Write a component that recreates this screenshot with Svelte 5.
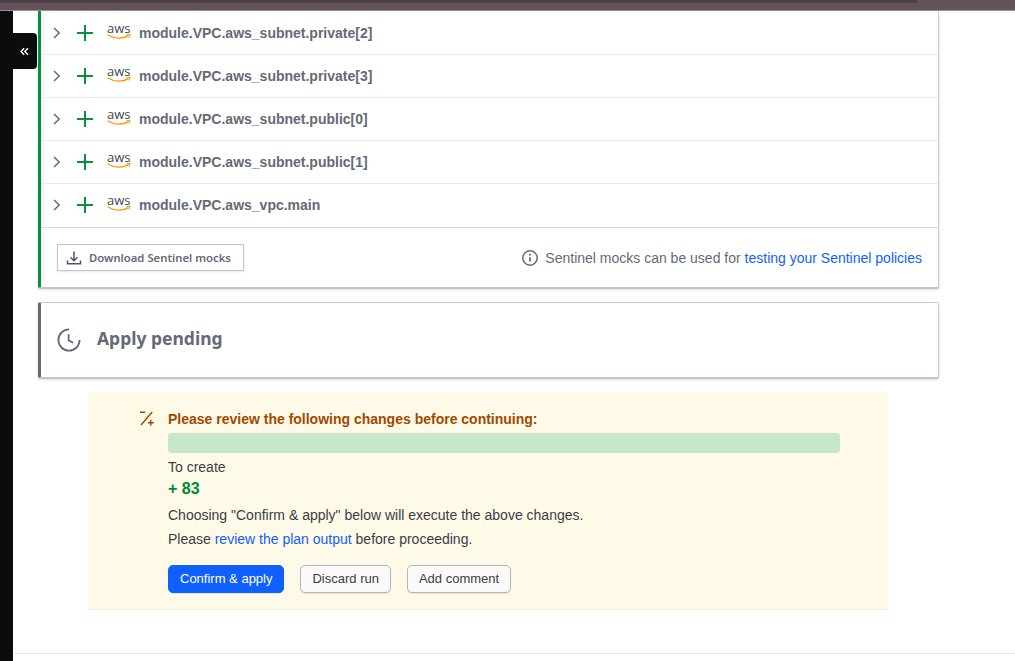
<script>
  const rows = [
    'module.VPC.aws_subnet.private[2]',
    'module.VPC.aws_subnet.private[3]',
    'module.VPC.aws_subnet.public[0]',
    'module.VPC.aws_subnet.public[1]',
    'module.VPC.aws_vpc.main'
  ];
</script>

<div class="page">
  <div class="topbar"><div class="tab"></div></div>
  <div class="body">
    <aside class="rail">
      <button class="handle" aria-label="Collapse">
        <svg width="9" height="9" viewBox="0 0 10 10" fill="none" stroke="#fff" stroke-width="1.6"><path d="M4.6 1.5 1.2 5l3.4 3.5M8.8 1.5 5.4 5l3.4 3.5"/></svg>
      </button>
    </aside>
    <main class="main">
      <section class="card plan">
        {#each rows as row}
          <div class="row">
            <svg class="chev" width="10" height="12" viewBox="0 0 10 12" fill="none" stroke="#656a76" stroke-width="1.5"><path d="M2 1l5.2 5L2 11"/></svg>
            <svg class="plus" width="16" height="16" viewBox="0 0 16 16" fill="none" stroke="#0a8f3c" stroke-width="2"><path d="M8 0v16M0 8h16"/></svg>
            <span class="aws">
              <span class="aws-text">aws</span>
              <svg width="24" height="6" viewBox="0 0 24 6" fill="none"><path d="M0.5 0.8C7 5 16 5.2 21.5 1.6" stroke="#f90" stroke-width="1.3"/><path d="M19.6 0.7 23.2 0.4 21.9 3.6" stroke="#f90" stroke-width="1"/></svg>
            </span>
            <span class="name">{row}</span>
          </div>
        {/each}
        <div class="foot">
          <button class="dl">
            <svg width="16" height="16" viewBox="0 0 16 16" fill="none" stroke="#4f5460" stroke-width="1.5"><path d="M8 1.5v9M4.5 7.2 8 10.7l3.5-3.5M1.5 10.5v3.2h13v-3.2"/></svg>
            <span>Download Sentinel mocks</span>
          </button>
          <p class="hint">
            <svg width="16" height="16" viewBox="0 0 16 16" fill="none" stroke="#656a76" stroke-width="1.5"><circle cx="8" cy="8" r="7.2"/><path d="M8 7.2v4.4" stroke-width="1.8"/><circle cx="8" cy="4.8" r="1" fill="#656a76" stroke="none"/></svg>
            <span>Sentinel mocks can be used for <a href="#t">testing your Sentinel policies</a></span>
          </p>
        </div>
      </section>

      <section class="card pending">
        <svg width="24" height="24" viewBox="0 0 24 24" fill="none" stroke="#656a76" stroke-width="1.8"><path d="M22.6 12A10.6 10.6 0 1 1 12 1.4"/><path d="M15.5 2.1l.1.05M19 4.2l.1.1M21.4 7.6l.05.1" stroke-width="2"/><path d="M11.6 6.2v6.2l4.6 2.4"/></svg>
        <h2>Apply pending</h2>
      </section>

      <section class="banner">
        <svg class="bi" width="16" height="16" viewBox="0 0 16 16" fill="none" stroke="#9e4b00" stroke-width="1.4"><path d="M1 1.2h5.2M13.2 1 2 14M11.8 8.8v6M8.8 11.8h6"/></svg>
        <div class="bc">
          <h3>Please review the following changes before continuing:</h3>
          <div class="bar"></div>
          <div class="create">To create</div>
          <div class="num">+ 83</div>
          <p class="l1">Choosing "Confirm &amp; apply" below will execute the above changes.</p>
          <p class="l2">Please <a href="#r">review the plan output</a> before proceeding.</p>
          <div class="btns">
            <button class="btn primary">Confirm &amp; apply</button>
            <button class="btn">Discard run</button>
            <button class="btn">Add comment</button>
          </div>
        </div>
      </section>
      <div class="rule"></div>
    </main>
  </div>
</div>

<style>
  :global(body) { margin: 0; background: #fff; overflow: hidden; }
  .page { width: 1015px; height: 661px; display: flex; flex-direction: column; font-family: "Liberation Sans", Arial, sans-serif; overflow: hidden; }
  .topbar { height: 10px; background: #64525b; border-bottom: 1px solid #9c8c94; flex: none; }
  .tab { width: 918px; height: 3px; background: #4f414a; border-radius: 0 0 6px 0; }
  .body { flex: 1; display: flex; position: relative; min-height: 0; }
  .rail { width: 13px; background: #0c0c0e; flex: none; }
  .handle { position: absolute; left: 13px; top: 22px; width: 24px; height: 36px; padding: 0 0 0 7px; display: flex; align-items: center; background: #0c0c0e; border: 0; border-radius: 0 4px 4px 0; }
  .main { flex: 1; display: flex; flex-direction: column; padding-left: 24px; border-left: 1px solid #fff; min-width: 0; }
  .card { width: 901px; box-sizing: border-box; background: #fff; border-radius: 0 0 2px 2px; box-shadow: 0 1px 1px rgba(101,106,118,.3), 0 2px 3px rgba(101,106,118,.18); }
  .plan { border-left: 3px solid #0a8f3c; border-right: 1px solid #c9ccd2; border-bottom: 1px solid #c2c5cb; padding-top: 1px; }
  .row { height: 43px; box-sizing: border-box; display: flex; align-items: center; border-bottom: 1px solid #ebebed; padding-left: 11px; }
  .row:nth-child(5) { border-bottom-color: #fff; }
  .chev { margin-right: 15px; flex: none; }
  .plus { margin-right: 14px; flex: none; }
  .aws { width: 24px; height: 22px; display: flex; flex-direction: column; align-items: flex-start; margin-right: 8px; margin-top: 0; flex: none; }
  .aws-text { font-family: "Open Sans", sans-serif; font-size: 13px; line-height: 13px; letter-spacing: 0; color: #3f4650; }
  .aws svg { display: block; margin-top: -1px; }
  .name { font-size: 14px; font-weight: 700; color: #656a76; }
  .foot { height: 59px; display: flex; align-items: center; justify-content: space-between; padding: 0 16px 0 16px; border-top: 1px solid #d9dade; }
  .dl { height: 27px; width: 187px; box-sizing: border-box; padding: 0 0 0 8px; display: flex; align-items: center; gap: 7px; background: #fff; border: 1px solid #c2c5cb; box-shadow: 0 1px 2px rgba(101,106,118,.15); font-family: "Noto Sans", sans-serif; font-size: 11.3px; font-weight: 600; color: #656a76; white-space: nowrap; }
  .hint { margin: 1px 0 0; display: flex; align-items: center; gap: 7px; font-size: 14px; color: #656a76; }
  a { color: #1060ff; text-decoration: none; }
  .pending { margin-top: 14px; height: 76px; flex: none; display: flex; align-items: center; gap: 16px; padding-left: 16px; border-left: 3px solid #656a76; border-top: 1px solid #c9ccd2; border-right: 1px solid #c9ccd2; border-bottom: 1px solid #c2c5cb; border-radius: 2px; }
  h2 { margin: -4px 0 0; font-family: "Noto Sans", sans-serif; font-size: 17.5px; font-weight: 700; color: #656a76; }
  .banner { margin: 15px 0 0 50px; width: 800px; height: 217px; box-sizing: border-box; flex: none; display: flex; background: #fff9e8; border-bottom: 1px solid #f7efd8; padding: 18px 0 0 51px; }
  .bi { margin-right: 13px; flex: none; }
  .bc { width: 672px; }
  h3 { margin: 0; font-size: 14px; line-height: 17px; font-weight: 700; color: #9e4b00; }
  .bar { height: 20px; margin-top: 5px; background: #c6e8c8; border-radius: 4px; }
  .create { margin-top: 6px; font-size: 14px; line-height: 16px; color: #3b3d45; }
  .num { margin-top: 4px; font-size: 16px; line-height: 20px; font-weight: 700; color: #00893a; }
  p { margin: 0; }
  .l1, .l2 { font-size: 14px; line-height: 16px; color: #3b3d45; }
  .l1 { margin-top: 8px; }
  .l2 { margin-top: 8px; }
  .btns { display: flex; gap: 16px; margin-top: 18px; }
  .btn { height: 28px; padding: 0 11px 2px; box-sizing: border-box; font-family: "Liberation Sans", Arial, sans-serif; font-size: 13px; color: #3b3d45; background: #fafafa; border: 1px solid #b2b6bd; border-radius: 5px; box-shadow: 0 1px 1px rgba(101,106,118,.15); }
  .primary { background: #1060ff; border-color: #1060ff; color: #fff; }
  .rule { margin: 43px 0 0 -24px; height: 1px; background: #e3e3e5; flex: none; }
</style>
